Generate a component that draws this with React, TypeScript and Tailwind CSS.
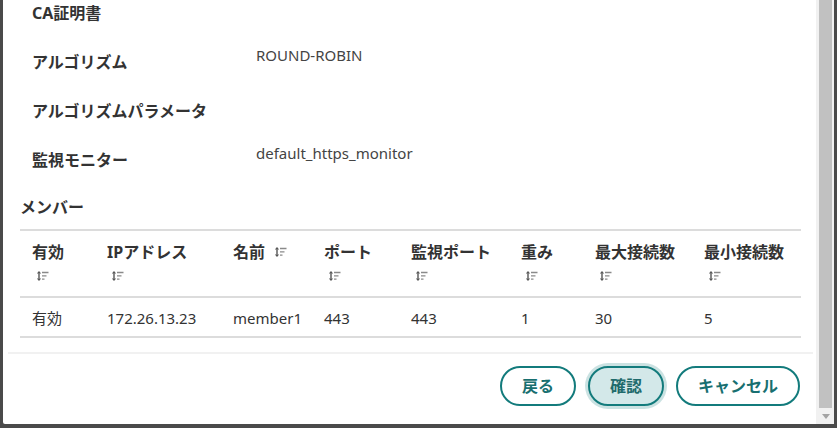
import React from 'react';

const font = { fontFamily: '"Noto Sans", "Noto Sans CJK JP", sans-serif' };

type Col = { label: string; inline?: boolean };

const columns: Col[] = [
  { label: '有効' },
  { label: 'IPアドレス' },
  { label: '名前', inline: true },
  { label: 'ポート' },
  { label: '監視ポート' },
  { label: '重み' },
  { label: '最大接続数' },
  { label: '最小接続数' },
];

const row = ['有効', '172.26.13.23', 'member1', '443', '443', '1', '30', '5'];

const details: [string, string][] = [
  ['CA証明書', ''],
  ['アルゴリズム', 'ROUND-ROBIN'],
  ['アルゴリズムパラメータ', ''],
  ['監視モニター', 'default_https_monitor'],
];

function SortIcon() {
  return (
    <svg width="12" height="10" viewBox="0 0 12 10" className="inline-block">
      <path d="M2 1v8" stroke="#555" strokeWidth="1.4" />
      <path d="M0.5 2.5L2 0.8L3.5 2.5M0.5 7.5L2 9.2L3.5 7.5" stroke="#555" strokeWidth="1.1" fill="none" />
      <path d="M5 1.5h6.5M5 4.8h4.5M5 8.2h2.5" stroke="#8a8a8a" strokeWidth="1.3" />
    </svg>
  );
}

function Button({ label, primary }: { label: string; primary?: boolean }) {
  return (
    <button
      className={
        primary
          ? 'h-[40px] w-[76px] rounded-full border-2 border-[#137b7c] bg-[#d3e8e9] text-[16px] font-bold text-[#1f6b6c] shadow-[0_0_0_3px_rgba(19,123,124,0.22)]'
          : 'h-[40px] rounded-full border-2 border-[#137b7c] bg-white px-[20px] text-[16px] font-bold text-[#186f70]'
      }
    >
      {label}
    </button>
  );
}

export default function App() {
  return (
    <div className="flex h-[428px] w-[837px] bg-[#4a4a4a] pb-[4px] pl-[3px] pr-[3px]" style={font}>
      <div className="flex flex-1 overflow-hidden rounded-bl-[2px] bg-white">
        <div className="flex flex-1 flex-col overflow-hidden">
          {/* detail rows */}
          <div className="-mt-[4px] pl-[29px]">
            {details.map(([k, v]) => (
              <div key={k} className="flex h-[49px]">
                <div className="w-[224px] pt-[5px] text-[16px] font-bold leading-[24px] text-[#333]">{k}</div>
                <div className="text-[15px] leading-[20px] text-[#444]">{v}</div>
              </div>
            ))}
          </div>

          {/* members */}
          <div className="px-[17px]">
            <div className="mt-[3px] text-[16px] font-bold leading-[24px] text-[#333]">メンバー</div>
            <div className="mt-[10px] w-[781px] border-t-2 border-[#dcdcdc]">
              <div className="grid grid-cols-[75px_126px_91px_87px_110px_74px_109px_109px] border-b-2 border-[#dcdcdc] pb-[8px] pt-[9px]">
                {columns.map((c) => (
                  <div key={c.label} className="pl-[12px] text-[16px] font-bold leading-[24px] text-[#333]">
                    {c.inline ? (
                      <div className="flex items-center gap-[10px]">
                        {c.label}
                        <SortIcon />
                      </div>
                    ) : (
                      <>
                        <div>{c.label}</div>
                        <div className="flex h-[24px] items-center pl-[5px]">
                          <SortIcon />
                        </div>
                      </>
                    )}
                  </div>
                ))}
              </div>
              <div className="grid grid-cols-[75px_126px_91px_87px_110px_74px_109px_109px] border-b-2 border-[#dcdcdc] pb-[6px] pt-[8px]">
                {row.map((v, i) => (
                  <div key={i} className="pl-[12px] text-[15px] leading-[24px] text-[#333]">
                    {v}
                  </div>
                ))}
              </div>
            </div>
          </div>

          {/* footer */}
          <div className="ml-[5px] mr-[3px] mt-[14px] h-[2px] bg-[#f1f1f1]" />
          <div className="flex justify-end gap-[12px] pr-[16px] pt-[12px]">
            <Button label="戻る" />
            <Button label="確認" primary />
            <Button label="キャンセル" />
          </div>
        </div>

        {/* scrollbar */}
        <div className="flex w-[18px] flex-col bg-[#f1f1f1] pl-[3px] pr-[2px]">
          <div className="h-[408px] bg-[#c1c1c1]" />
          <div className="flex flex-1 items-center justify-center">
            <svg width="8" height="5" viewBox="0 0 8 5">
              <path d="M0 0h8L4 5z" fill="#a3a3a3" />
            </svg>
          </div>
        </div>
      </div>
    </div>
  );
}
